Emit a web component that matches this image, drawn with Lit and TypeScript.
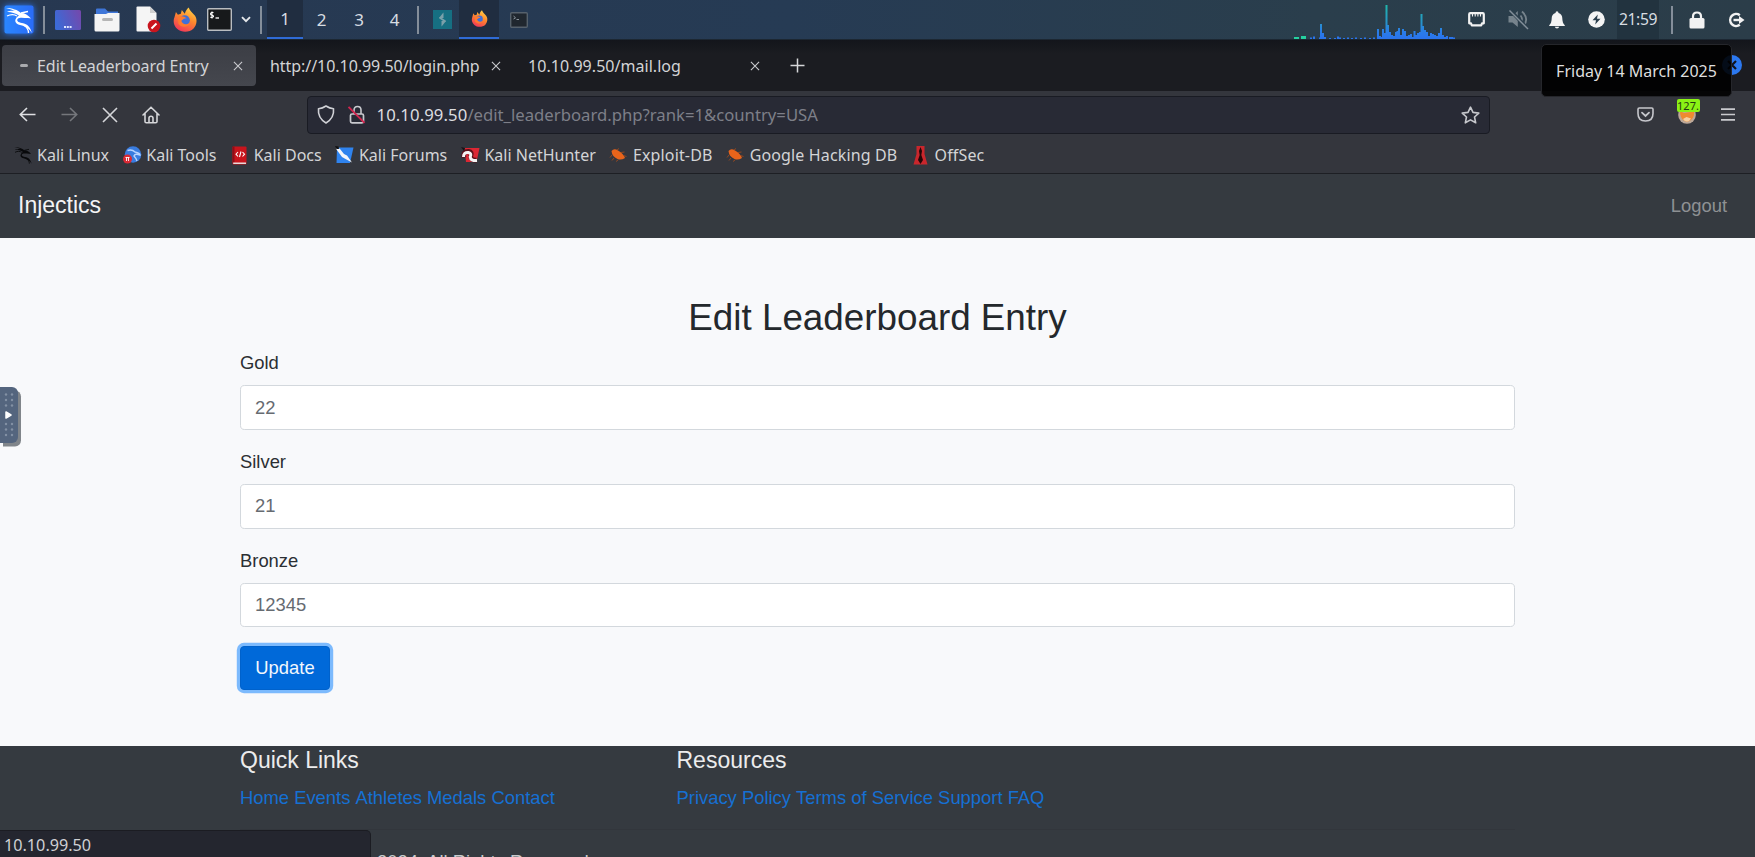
import { LitElement, html, css, svg } from "lit";
import { customElement, property } from "lit/decorators.js";
import { classMap } from "lit/directives/class-map.js";

const dragonBody = svg`
  <path d="M2 3 C8 3 14 5 17 8 C21 8 24 10 27 13.5 L24 13 C20 13 16 12 14 13.5 C12 15.500 14 17.500 18 18 C24 19 26 22 28 28 C25 23.500 22 21.500 18 20.500 C12 19.500 10 16.500 12 13.500 C12.500 12 14 11 15 10.500 C11 8 6 6.500 3 7 C6 5.500 9 5.800 11 6 C8 4.600 5 3.800 2 3Z" fill="currentColor"/>
  <path d="M3 11 C7 9 10 9 13 11 M17 8 L24 6.500 M20 20.500 C23.500 22.500 24.500 25 24.500 28" fill="none" stroke="currentColor" stroke-width="1.300"/>`;

const foxLogo = svg`
  <defs>
    <linearGradient id="fx" x1=".8" y1="0" x2=".3" y2="1"><stop offset="0" stop-color="#ffd94a"/><stop offset=".45" stop-color="#ff8a2c"/><stop offset="1" stop-color="#f0365a"/></linearGradient>
  </defs>
  <path d="M3 5 L5 8 L8 7 L9 3 L12 7 C13 4 14 2 16 .5 C17 4 20 6 22.500 9 C25 13 24.500 18 21 22 C17 26 9 26.500 4.500 22.500 C.5 19 0 14 1.500 10.500Z" fill="url(#fx)"/>
  <circle cx="12" cy="13.500" r="5.200" fill="#3f6fd8"/>
  <path d="M5 11 C8 8.500 11 9.500 14 11.500 C11 11.500 10 13 8.500 14 C9.500 18 14 18.500 17.500 16 C16 21 8 21.500 5.500 17Z" fill="#ff7a2e"/>`;

@customElement("cell-icon")
class CellIcon extends LitElement {
  @property() name = "";
  static styles = css`
    :host { display: inline-flex; flex: none; }
    svg { display: block; overflow: visible; }
  `;

  render() {
    switch (this.name) {
      case "kali":
        return html`<svg width="30" height="30" viewBox="0 0 30 30" color="#fff"><defs><linearGradient id="k" x1="0" x2="1"><stop offset="0" stop-color="#2a86ff"/><stop offset="1" stop-color="#2a6cf8"/></linearGradient></defs><rect x=".5" y=".5" width="29" height="28" rx="2" fill="url(#k)"/>${dragonBody}</svg>`;
      case "desktop":
        return html`<svg width="26" height="20" viewBox="0 0 26 20"><defs><linearGradient id="d" x1="0" y1=".5" x2="1" y2=".2"><stop offset="0" stop-color="#3c6ad6"/><stop offset="1" stop-color="#7349ad"/></linearGradient></defs><rect width="26" height="20" rx="1.500" fill="url(#d)"/><path d="M9 17h8" stroke="#dfe6ff" stroke-width="1.800" stroke-dasharray="2 .8"/></svg>`;
      case "folder":
        return html`<svg width="26" height="24" viewBox="0 0 26 24"><path d="M2 1.500Q2 .5 3 .5H11L14 3.500H24V9H2Z" fill="#3f76d8"/><path d="M.5 6H12L14 5H25.500V22Q25.500 23.500 24 23.500H2Q.5 23.500 .5 22Z" fill="#f4f4f4"/><rect x="8" y="10" width="11" height="3" rx="1.500" fill="#b5b5b5"/></svg>`;
      case "doc":
        return html`<svg width="25" height="27" viewBox="0 0 25 27"><path d="M1.500 .5H14L20.500 7V23.500Q20.500 25.500 19 25.500H1.500Q.5 25.500 .5 24.500V1.500Q.5 .5 1.500 .5Z" fill="#f5f5f5"/><path d="M14 .5V7H20.500Z" fill="#cfcfcf"/><circle cx="18" cy="20" r="6.300" fill="#c9151e"/><path d="M15.500 22.500L20.500 17.500" stroke="#fff" stroke-width="2"/></svg>`;
      case "firefox":
        return html`<svg width="24" height="25" viewBox="0 0 24.500 25.500">${foxLogo}</svg>`;
      case "firefox-small":
        return html`<svg width="17" height="17" viewBox="0 0 24.500 25.500">${foxLogo}</svg>`;
      case "terminal":
        return html`<svg width="25" height="23" viewBox="0 0 25 23"><rect x=".7" y=".7" width="23.600" height="21.600" rx="1" fill="#17191b" stroke="#b9bdc1" stroke-width="1.400"/><path d="M6.500 4.500Q3.500 4.300 3.500 6Q3.500 7 5 7.200Q6.700 7.500 6.500 8.600Q6 9.800 3.300 9.200M5 3.500V10.500" fill="none" stroke="#fff" stroke-width="1.100"/><path d="M8.500 10H12" stroke="#fff" stroke-width="1.300"/></svg>`;
      case "chevron":
        return html`<svg width="10" height="7" viewBox="0 0 10 7"><path d="M1 1.200L5 5.200L9 1.200" fill="none" stroke="#e4e7ea" stroke-width="1.900"/></svg>`;
      case "burp":
        return html`<svg width="19" height="19" viewBox="0 0 19 19"><rect width="19" height="19" fill="#166f82"/><path d="M10.500 2.500V8H6L10 3M8.500 16.500V11H13L9 16" fill="#7aa0aa"/><path d="M6.500 7.500L12.500 11.500" stroke="#7aa0aa" stroke-width="1.800"/></svg>`;
      case "terminal-dim":
        return html`<svg width="18" height="16" viewBox="0 0 18 16"><rect x=".7" y=".7" width="16.600" height="14.600" rx="1" fill="#20272f" stroke="#56616c" stroke-width="1.400"/><path d="M3.500 4L5.500 5.800L3.500 7M6.500 7.500H9" fill="none" stroke="#8b949c"/></svg>`;
      case "ethernet":
        return html`<svg width="17" height="15" viewBox="0 0 17 15"><path d="M2.300 1.200H14.700Q15.800 1.200 15.800 2.300V11.300H14L13.200 13.300H3.800L3 11.300H1.200V2.300Q1.200 1.200 2.300 1.200Z" fill="none" stroke="#f2f2f2" stroke-width="2.200" stroke-linejoin="round"/><path d="M4.500 2V4.500M7.200 2V4.500M9.900 2V4.500M12.500 2V4.500" stroke="#f2f2f2" stroke-width="1.100"/></svg>`;
      case "mute":
        return html`<svg width="21" height="21" viewBox="0 0 21 21"><path d="M.5 7H4.500L9.800 2V18L4.500 13.500H.5Z" fill="#76838c"/><path d="M12.500 6.500Q15.500 10 12.500 14M14 2.500Q21.500 9.500 15.500 17.500" fill="none" stroke="#76838c" stroke-width="1.800"/><path d="M1.500 .5L20 20" stroke="#2b3f4d" stroke-width="3.500"/><path d="M1.500 1.500L20 20" stroke="#84909a" stroke-width="1.500"/></svg>`;
      case "bell":
        return html`<svg width="16" height="18" viewBox="0 0 16 18"><path d="M8 .3Q9.500 .3 9.500 1.900Q13.300 3 13.300 7.200Q13.300 12 15.800 14.300V15H.2V14.300Q2.700 12 2.700 7.200Q2.700 3 6.500 1.900Q6.500 .3 8 .3Z M5.800 15.800H10.200Q9.800 17.500 8 17.500Q6.200 17.500 5.800 15.800Z" fill="#f4f4f4"/></svg>`;
      case "power":
        return html`<svg width="17" height="17" viewBox="0 0 17 17"><circle cx="8.500" cy="8.500" r="8.300" fill="#f4f4f4"/><path d="M9.800 3.500L4.500 9.300H8L7.200 13.500L12.500 7.700H9Z" fill="#2b3f4d"/></svg>`;
      case "padlock":
        return html`<svg width="16" height="18" viewBox="0 0 16 18"><rect x=".5" y="7" width="15" height="10.500" rx="1.500" fill="#f2f2f2"/><path d="M4 8V5.500Q4 1.500 8 1.500Q12 1.500 12 5.500V8" fill="none" stroke="#f2f2f2" stroke-width="2.200"/></svg>`;
      case "exit":
        return html`<svg width="18" height="16" viewBox="0 0 18 16"><path d="M12.800 3.200A6 6 0 1 0 12.800 12.800" fill="none" stroke="#f2f2f2" stroke-width="2.500"/><path d="M6.500 8H13" stroke="#f2f2f2" stroke-width="2.400"/><path d="M12 4L17.500 8L12 12Z" fill="#f2f2f2"/></svg>`;
      case "close":
        return html`<svg width="10" height="10" viewBox="0 0 11 11"><path d="M1 1L10 10M10 1L1 10" stroke="#c9cace" stroke-width="1.200"/></svg>`;
      case "plus":
        return html`<svg width="15" height="15" viewBox="0 0 15 15"><path d="M7.500 .5V14.500M.5 7.500H14.500" stroke="#d5d6d9" stroke-width="1.500"/></svg>`;
      case "back":
        return html`<svg width="17" height="15" viewBox="0 0 17 15"><path d="M8 1L1.300 7.500L8 14M1.500 7.500H16.500" fill="none" stroke="#dfe0e3" stroke-width="1.600"/></svg>`;
      case "forward":
        return html`<svg width="17" height="15" viewBox="0 0 17 15"><path d="M9 1L15.700 7.500L9 14M15.500 7.500H.5" fill="none" stroke="#75777c" stroke-width="1.600"/></svg>`;
      case "stop":
        return html`<svg width="16" height="16" viewBox="0 0 16 16"><path d="M1 1L15 15M15 1L1 15" stroke="#d5d6d9" stroke-width="1.600"/></svg>`;
      case "home":
        return html`<svg width="18" height="18" viewBox="0 0 18 18"><path d="M1 9L9 1.200L17 9M3 7.500V15.500Q3 16.800 4.300 16.800H13.700Q15 16.800 15 15.500V7.500M7 16.500V12Q7 10.300 9 10.300Q11 10.300 11 12V16.500" fill="none" stroke="#d5d6d9" stroke-width="1.600" stroke-linecap="round" stroke-linejoin="round"/></svg>`;
      case "shield":
        return html`<svg width="18" height="19" viewBox="0 0 18 19"><path d="M9 1Q12.500 3.300 16.500 3.700Q17.500 13 9 18Q.5 13 1.500 3.700Q5.500 3.300 9 1Z" fill="none" stroke="#d0d1d6" stroke-width="1.600" stroke-linejoin="round"/></svg>`;
      case "insecure":
        return html`<svg width="18" height="19" viewBox="0 0 18 19"><rect x="2.500" y="9" width="13" height="8.800" rx="1.500" fill="none" stroke="#c8c9ce" stroke-width="1.700"/><path d="M6 9V5.500Q6 1.500 9.500 1.500Q13 1.500 13 5V9" fill="none" stroke="#c8c9ce" stroke-width="1.600"/><path d="M.5 1.800L16.500 17.800" stroke="#d0254f" stroke-width="1.900"/></svg>`;
      case "star":
        return html`<svg width="19" height="18" viewBox="0 0 19 18"><path d="M9.500 1.200L12 6.400L17.800 7.100L13.500 11L14.700 16.800L9.500 13.900L4.300 16.800L5.500 11L1.200 7.100L7 6.400Z" fill="none" stroke="#c6c7cc" stroke-width="1.600" stroke-linejoin="round"/></svg>`;
      case "pocket":
        return html`<svg width="17" height="15" viewBox="0 0 17 15"><path d="M2.300 1H14.700Q16 1 16 2.300V6.500Q16 14 8.500 14Q1 14 1 6.500V2.300Q1 1 2.300 1Z" fill="none" stroke="#c6c7cc" stroke-width="1.600"/><path d="M5 5.700L8.500 9L12 5.700" fill="none" stroke="#c6c7cc" stroke-width="1.800" stroke-linecap="round"/></svg>`;
      case "foxy":
        return html`<svg width="18" height="18" viewBox="0 0 18 18"><circle cx="9" cy="9" r="8.800" fill="#bda898"/><path d="M2 5L6 7L12 6L16 4Q17 11 13 14Q9 17 5 14Q2 11 2 5Z" fill="#ef8a30"/><path d="M5 13L8.500 11L13 12.500Q11 16 9 15.500Q7 16 5 13Z" fill="#f7cfa0"/></svg>`;
      case "menu":
        return html`<svg width="14" height="13" viewBox="0 0 14 13"><path d="M0 1.200H14M0 6.500H14M0 11.800H14" stroke="#c9cace" stroke-width="1.700"/></svg>`;
      case "b-linux":
        return html`<svg width="20" height="20" viewBox="0 0 30 30" color="#08090b">${dragonBody}</svg>`;
      case "b-tools":
        return html`<svg width="19" height="18" viewBox="0 0 19 18"><circle cx="10" cy="8.500" r="8.300" fill="#397cdf"/><path d="M4.500 4.500Q9 3 12 6Q17 7 17 9Q12 7 11 10Q13 12 14 15" fill="none" stroke="#b9d4ff" stroke-width="1.400"/><circle cx="4.500" cy="13" r="4.500" fill="#d92a35"/><path d="M2.500 11.500H6.500M3.500 11.500V15M5.500 11.500V15" stroke="#fff" stroke-width=".9"/></svg>`;
      case "b-docs":
        return html`<svg width="15" height="19" viewBox="0 0 15 19"><rect x=".5" y=".5" width="14" height="18" rx="1" fill="#c8141c"/><rect x=".5" y=".5" width="2" height="16" fill="#8f0e16"/><rect x="1.200" y="16.500" width="12.800" height="1.500" fill="#e6d9d9"/><path d="M6 6L4 8.200L6 10.500M10.500 6L12.500 8.200L10.500 10.500M9 5.500L7.500 11" fill="none" stroke="#fff" stroke-width="1.100"/></svg>`;
      case "b-forums":
        return html`<svg width="19" height="18" viewBox="0 0 19 18"><path d="M2 1.500H18.500L15 17H1.500Z" fill="#2f83ee"/><path d="M1 1L5 3L9 8L12 9.500L17 16.500L10.500 13L7 11L1.500 3.500Z" fill="#f4f6fa"/><path d="M0 0L3.500 .5L4 3L1.500 3Z" fill="#111"/></svg>`;
      case "b-hunter":
        return html`<svg width="19" height="17" viewBox="0 0 19 17"><path d="M3.500 1H18.500L15.500 15H5Z" fill="#dc2733"/><path d="M3 10.500Q1.500 4.500 7.500 4.500Q11.500 5 9.800 9Q9.500 13.500 15.500 13" fill="none" stroke="#5b1019" stroke-width="4.800"/><path d="M2.500 10Q2.500 5 7.500 5.500Q11 6.500 9.200 9.800Q9.500 14 16 13.500" fill="none" stroke="#f6f3f3" stroke-width="3"/><path d="M0 0L4 1L3 4Z" fill="#181317"/></svg>`;
      case "b-exploit":
        return html`<svg width="17" height="14" viewBox="0 0 17 14"><path d="M1.500 3Q4 0 8 2.500Q13 5 15 10Q11 12.500 7.500 11Q2 8.500 1.500 3Z" fill="#e8641b"/><path d="M2 7L0 9.500M4 10L2 12.500M8 12L6 13.500M7 2L9 .5M11 4.500L14.500 4M13.500 7.500L16.500 8.500" stroke="#9c4a1e" stroke-width=".9"/></svg>`;
      case "b-offsec":
        return html`<svg width="15" height="19" viewBox="0 0 15 19"><path d="M3.500 0H11.500V8L14.500 18.500H.5L3.500 8Z" fill="#c9262c"/><path d="M7.500 1L9 5L8.300 9L10 14L7.500 18L5 14L6.700 9L6 5Z" fill="#240607"/></svg>`;
      default:
        return html``;
    }
  }
}

/** [x, height] pairs of the network load graph, baseline at the panel's lower edge. */
const load: [number, number][] = [
  [17, 1.5], [20, 2.5], [26, 1.5], [27, 15], [29, 6], [31, 2], [36, 1], [41, 1], [44, 2.5], [46, 1.5], [50, 1], [54, 1.5], [58, 1], [62, 1.5],
  [67, 1], [71, 1.5], [76, 1], [80, 1.5], [84, 10], [86, 3], [88, 2], [89, 10], [91, 6], [92.5, 34], [94, 14], [96, 7], [98, 4], [100, 3],
  [102, 7], [103.500, 8], [105, 11], [107, 4], [109, 10], [111, 8], [113, 3], [115, 4], [117, 5], [119, 2], [120.5, 8], [122, 4], [124, 6],
  [126, 7], [127.5, 25], [129, 13], [131, 9], [133, 7], [135, 3], [137, 6], [139, 5], [141, 4], [143, 3], [145, 6], [147, 11], [149, 4],
  [151, 2], [153, 3], [156, 2], [158, 2], [160, 1.5],
];

const bookmarks = [
  ["b-linux", "Kali Linux"], ["b-tools", "Kali Tools"], ["b-docs", "Kali Docs"], ["b-forums", "Kali Forums"],
  ["b-hunter", "Kali NetHunter"], ["b-exploit", "Exploit-DB"], ["b-exploit", "Google Hacking DB"], ["b-offsec", "OffSec"],
];

@customElement("desktop-panel")
class DesktopPanel extends LitElement {
  static styles = css`
    :host { display: block; height: 40px; }
    .panel {
      display: grid; height: 40px; align-items: center; justify-items: center;
      grid-template-columns: 38px 11px 38px 40px 42px 32px 37px 16px 13px 36px 37px 38px 33px 14px 34px 40px 40px 1fr 161px 42px 42px 36px 42px 42px 26px 23px 47px;
      grid-template-rows: 39px 1px;
      background: linear-gradient(90deg, #273851 0%, #263b54 45%, #2a3e4c 75%, #2b3d49 100%);
      box-sizing: border-box; border-bottom: 1px solid #1c2732;
      font: 17px/39px "Noto Sans", sans-serif; color: #d8dde2;
    }
    .sep { width: 2px; height: 28px; background: #848e9a; }
    .cell { display: flex; align-items: center; justify-content: center; width: 100%; height: 39px; box-sizing: border-box; }
    .on { background: #202d40; border-bottom: 2px solid #2f6bd6; }
    .clock { background: #22333f; font-size: 15.700px; letter-spacing: -.4px; }
    .exit { padding-left: 8px; }
    .kali { filter: drop-shadow(0 0 3px #2a7bff); }
    .graph { align-self: end; }
  `;
  render() {
    const ws = ["1", "2", "3", "4"];
    return html`<div class="panel">
      <cell-icon class="kali" name="kali"></cell-icon><i class="sep"></i>
      <cell-icon name="desktop"></cell-icon><cell-icon name="folder"></cell-icon><cell-icon name="doc"></cell-icon>
      <cell-icon name="firefox"></cell-icon><cell-icon name="terminal"></cell-icon><cell-icon name="chevron"></cell-icon>
      <i class="sep"></i>
      ${ws.map((n, i) => html`<span class=${classMap({ cell: true, on: i === 0 })}>${n}</span>`)}
      <i class="sep"></i>
      <span class="cell"><cell-icon name="burp"></cell-icon></span>
      <span class="cell on"><cell-icon name="firefox-small"></cell-icon></span>
      <span class="cell"><cell-icon name="terminal-dim"></cell-icon></span>
      <span></span>
      <svg class="graph" width="161" height="39" viewBox="0 0 161 39">
        <defs><linearGradient id="g" gradientUnits="userSpaceOnUse" x1="0" y1="4" x2="0" y2="38"><stop offset="0" stop-color="#1fb9a9"/><stop offset=".55" stop-color="#2793c9"/><stop offset=".8" stop-color="#2a7ee8"/><stop offset="1" stop-color="#2a74ec"/></linearGradient></defs>
        <rect x="0" y="37" width="5" height="2" fill="#25d0a0"/><rect x="7" y="36" width="5" height="3" fill="#25d0a0"/>
        ${load.map(([x, h]) => svg`<rect x=${x - 1} y=${39 - h} width="2" height=${h} fill="url(#g)"/>`)}
      </svg>
      <cell-icon name="ethernet"></cell-icon><cell-icon name="mute"></cell-icon><cell-icon name="bell"></cell-icon><cell-icon name="power"></cell-icon>
      <span class="cell clock">21:59</span><i class="sep"></i>
      <cell-icon name="padlock"></cell-icon><cell-icon class="exit" name="exit"></cell-icon>
    </div>`;
  }
}

@customElement("browser-chrome")
class BrowserChrome extends LitElement {
  static styles = css`
    :host { display: block; height: 133.500px; font: 16px/22px "Noto Sans", sans-serif; color: #d3d4d6; }
    * { box-sizing: border-box; }
    .tabs { display: flex; height: 51px; padding: 5px 13px 5px 2px; align-items: stretch; background: linear-gradient(#13151b 0, #1b1c21 14px); }
    .tab { display: flex; align-items: center; justify-content: space-between; border-radius: 4px; white-space: nowrap; padding-top: 1px; }
    .one { width: 254px; padding: 0 13px 0 18px; background: linear-gradient(#3c3e45, #45474e); }
    .one span { flex: 1; padding-left: 9px; letter-spacing: -.05px; }
    .dash { width: 8px; height: 3px; border-radius: 2px; background: #aaabae; }
    .two { width: 258px; padding: 0 13px 0 14px; letter-spacing: -.05px; }
    .three { width: 259px; padding: 0 13px 0 14px; letter-spacing: .04px; }
    .plus { padding-left: 17px; align-self: center; }
    .win { display: flex; align-items: center; justify-content: center; width: 20px; height: 20px; margin: 10px 0 0 auto; border-radius: 50%; background: #2c78ef; }
    .win svg { display: block; }
    .bar { display: grid; height: 46px; padding-top: 1px; align-items: center; justify-items: center; background: #34363d;
      grid-template-columns: 54px 30px 52px 30px 141px 1183px 1fr 42px 41px 41px 7px; }
    .url { display: flex; align-items: center; width: 100%; height: 38px; padding: 0 9px 0 8.500px; border: 1.500px solid #191b23; border-radius: 4px; background: #282a35; font-size: 16.700px; color: #7d7f88; }
    .url b { font-weight: 400; color: #dcdde0; padding-left: 11px; letter-spacing: .1px; }
    .lock { padding-left: 13px; }
    .star { margin-left: auto; }
    .foxy { position: relative; display: flex; }
    .badge { position: absolute; left: -1px; top: -7px; width: 23px; height: 13px; border-radius: 2px; background: #8bf215; color: #253a10; font-size: 11px; line-height: 13px; text-align: center; }
    .marks { display: flex; height: 36.500px; background: #34363d; border-bottom: 1.500px solid #1d1f24; align-items: center; padding: 1px 0 0 13px; white-space: nowrap; }
    .mark { display: flex; align-items: center; }
    .pic { display: flex; justify-content: center; width: 20px; margin-right: 4px; }
    .mark + .mark { margin-left: 13.200px; }
    .mark:nth-child(n + 6) { letter-spacing: .14px; }
    .tip { position: absolute; z-index: 2; left: 1541px; top: 44px; width: 191px; height: 53px; border: 1px solid #25262b; border-radius: 5px; background: rgba(0, 0, 0, .9); line-height: 53px; text-align: center; color: #dedede; }
  `;
  render() {
    return html`
      <div class="tabs">
        <div class="tab one"><i class="dash"></i><span>Edit Leaderboard Entry</span><cell-icon name="close"></cell-icon></div>
        <div class="tab two">http://10.10.99.50/login.php<cell-icon name="close"></cell-icon></div>
        <div class="tab three">10.10.99.50/mail.log<cell-icon name="close"></cell-icon></div>
        <cell-icon class="plus" name="plus"></cell-icon>
        <div class="win"><svg width="10" height="10" viewBox="0 0 10 10"><path d="M1 1L9 9M9 1L1 9" stroke="#10131c" stroke-width="2.200"/></svg></div>
      </div>
      <div class="tip">Friday 14 March 2025</div>
      <div class="bar">
        <cell-icon name="back"></cell-icon><cell-icon name="forward"></cell-icon><cell-icon name="stop"></cell-icon><cell-icon name="home"></cell-icon><span></span>
        <div class="url"><cell-icon name="shield"></cell-icon><cell-icon class="lock" name="insecure"></cell-icon><b>10.10.99.50</b>/edit_leaderboard.php?rank=1&amp;country=USA<cell-icon class="star" name="star"></cell-icon></div>
        <span></span><cell-icon name="pocket"></cell-icon>
        <div class="foxy"><cell-icon name="foxy"></cell-icon><span class="badge">127.</span></div>
        <cell-icon name="menu"></cell-icon><span></span>
      </div>
      <div class="marks">${bookmarks.map(([i, t]) => html`<span class="mark"><span class="pic"><cell-icon name=${i}></cell-icon></span>${t}</span>`)}</div>`;
  }
}

@customElement("app-root")
class AppRoot extends LitElement {
  static styles = css`
    :host { display: block; position: relative; height: 857px; overflow: hidden; font: 18.400px/27.600px "Liberation Sans", sans-serif; color: #212529; background: #f8f9fb; }
    * { box-sizing: border-box; }
    .nav { display: flex; align-items: center; justify-content: space-between; height: 64.500px; padding: 1px 28px 0 18px; background: #353a40; color: rgba(255, 255, 255, .45); }
    .brand { font-size: 23px; color: #f4f4f5; }
    .main { height: 508px; padding: 58px 240px 0; color: #2b2f33; }
    h1 { margin: 0 0 9px; font-size: 36.800px; line-height: 44.200px; font-weight: 500; text-align: center; color: #24282c; }
    .group { display: flex; flex-direction: column; gap: 8.700px; margin-bottom: 18.400px; }
    input { height: 44.200px; padding: 0 14px; border: 1.150px solid #d3d8dd; border-radius: 4.600px; background: #fff; font: inherit; color: #666b71; outline: 0; }
    button { display: block; width: 90px; height: 44px; border: 1px solid #0062cc; border-radius: 4px; padding: 0; background: #0069d9; color: #f2f7fd; font: inherit; box-shadow: 0 0 0 3.200px rgba(0, 123, 255, .5); }
    .footer { height: 111px; padding: 1px 240px 0; background: #353a40; color: #ececed; }
    .cols { display: grid; grid-template-columns: 436.500px 1fr; height: 83px; border-bottom: 1px solid #32363c; }
    h5 { margin: 0 0 9.200px; font-size: 23px; line-height: 27.600px; font-weight: 500; }
    .links { display: flex; gap: 5.100px; color: #1570d3; }
    .copy { padding: 18.400px 0 0 137px; color: #c9cbcd; }
    .status { position: absolute; left: 0; top: 830px; width: 371px; height: 28px; padding-left: 4px; border: 1.500px solid #1b1c22; border-left: 0; border-radius: 0 5px 0 0; background: #24262f; font: 16.200px/28px "Noto Sans", sans-serif; color: #cfd0d4; }
    .handle { position: absolute; left: 0; top: 387px; width: 17.500px; height: 56px; border-radius: 0 6px 6px 0; background: #54657e; box-shadow: 3px 3.500px 0 #80858a; }
    .handle svg { display: block; }
  `;
  render() {
    const dots = [7.5, 13, 18.5, 37, 42.5, 48];
    return html`
      <desktop-panel></desktop-panel>
      <browser-chrome></browser-chrome>
      <div class="nav"><span class="brand">Injectics</span><span>Logout</span></div>
      <div class="main">
        <h1>Edit Leaderboard Entry</h1>
        ${[["Gold", "22"], ["Silver", "21"], ["Bronze", "12345"]].map(([l, v]) => html`<label class="group">${l}<input .value=${v} /></label>`)}
        <button>Update</button>
      </div>
      <div class="footer">
        <div class="cols">
          <div><h5>Quick Links</h5><div class="links">${["Home", "Events", "Athletes", "Medals", "Contact"].map((t) => html`<span>${t}</span>`)}</div></div>
          <div><h5>Resources</h5><div class="links">${["Privacy Policy", "Terms of Service", "Support", "FAQ"].map((t) => html`<span>${t}</span>`)}</div></div>
        </div>
        <div class="copy">2024. All Rights Reserved.</div>
      </div>
      <div class="status">10.10.99.50</div>
      <div class="handle"><svg width="17" height="56" viewBox="0 0 17 56">${dots.map((y) => svg`<circle cx="6" cy=${y} r="1.200" fill="#8391a4"/><circle cx="12" cy=${y} r="1.200" fill="#8391a4"/>`)}<path d="M6 25L11 28L6 31Z" fill="#fff" stroke="#fff" stroke-width="1.500" stroke-linejoin="round"/></svg></div>`;
  }
}
